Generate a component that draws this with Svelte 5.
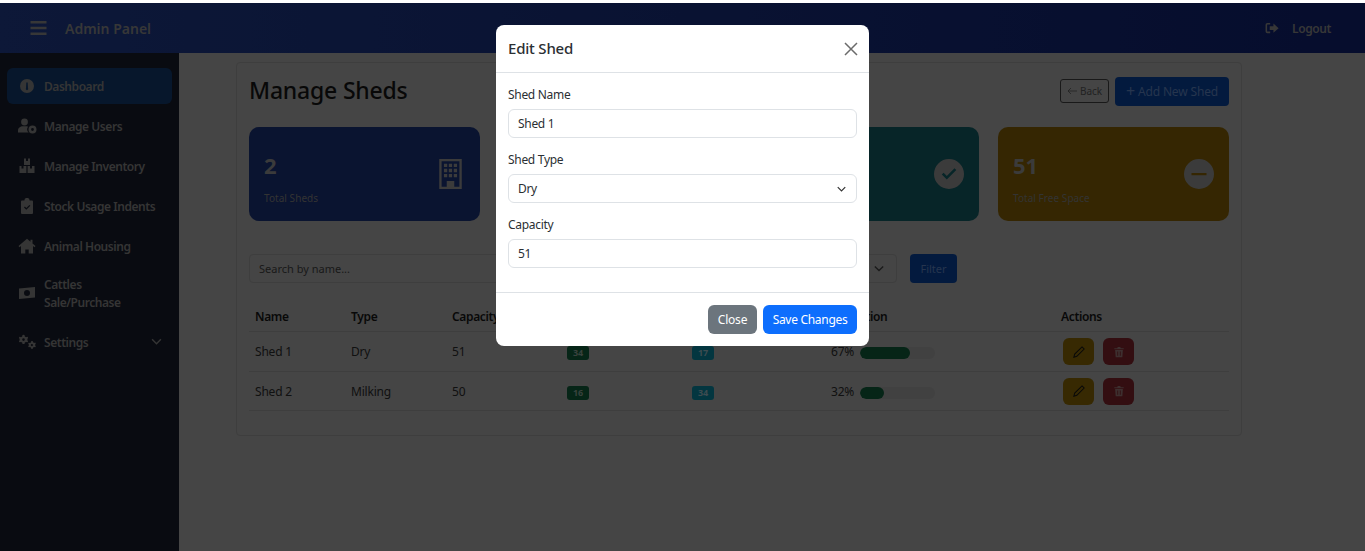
<script>
	const nav = [
		{ id: 'gauge', label: 'Dashboard', active: true },
		{ id: 'users', label: 'Manage Users' },
		{ id: 'boxes', label: 'Manage Inventory' },
		{ id: 'clip', label: 'Stock Usage Indents' },
		{ id: 'home', label: 'Animal Housing' },
		{ id: 'money', label: 'Cattles Sale/Purchase', tall: true },
		{ id: 'cogs', label: 'Settings', caret: true }
	];
	const sheds = [
		{ name: 'Shed 1', type: 'Dry', capacity: 51, occupied: 34, free: 17, pct: 67 },
		{ name: 'Shed 2', type: 'Milking', capacity: 50, occupied: 16, free: 34, pct: 32 }
	];
</script>

<div class="page">
	<header class="navbar">
		<div class="brand">
			<svg class="burger" viewBox="0 0 16 14" width="17" height="14"><path d="M0 0h16v2.400H0zM0 5.800h16v2.400H0zM0 11.600h16V14H0z" /></svg>
			<span>Admin Panel</span>
		</div>
		<div class="logout">
			<svg viewBox="0 0 16 14" width="15" height="13"><path d="M5.500 1H2.500A2 2 0 0 0 .5 3v7a2 2 0 0 0 2 2h3v-1.800h-3a.3.3 0 0 1-.3-.3V3.100a.3.3 0 0 1 .3-.3h3zM9 1.600l5.600 5-5.600 5V8.700H5V4.600h4z" /></svg>
			<span>Logout</span>
		</div>
	</header>

	<div class="layout">
		<aside class="sidebar">
			{#each nav as item}
				<div class="nav-item" class:active={item.active} class:tall={item.tall}>
					<svg class="nav-icon" viewBox="0 0 20 16" width="20" height="16">
						{#if item.id === 'gauge'}
							<path fill-rule="evenodd" d="M10 1a7 7 0 1 1 0 14 7 7 0 0 1 0-14zM9.300 4.500l-.3 5.800a1.200 1.200 0 1 0 2 0l-.3-5.800z" />
						{:else if item.id === 'users'}
							<circle cx="7.500" cy="4" r="3.400" /><path d="M1 14.500v-1.700C1 10 3.200 8.300 6 8.300h3c.8 0 1.400.1 2 .4a4.500 4.500 0 0 0 .7 5.800z" /><path fill-rule="evenodd" d="M15.500 7.500a4 4 0 1 1 0 8 4 4 0 0 1 0-8zm0 2.600a1.400 1.400 0 1 0 0 2.800 1.400 1.400 0 0 0 0-2.800z" />
						{:else if item.id === 'boxes'}
							<path d="M7 .5h2v2.500h2V.5h2V7H7zM2.500 8h2v2.500h2V8h2.900v7H2.500zM10.600 8h2.400v2.500h2V8h2.500v7h-6.900z" />
						{:else if item.id === 'clip'}
							<path fill-rule="evenodd" d="M5 2.500h2.400a2.600 2.600 0 0 1 5.200 0H15a1 1 0 0 1 1 1V15a1 1 0 0 1-1 1H5a1 1 0 0 1-1-1V3.500a1 1 0 0 1 1-1zM7 9.500l2.300 2.300 4-4-.9-.9-3.100 3.100-1.400-1.400z" />
						{:else if item.id === 'home'}
							<path d="M10 .8L1.500 8l1 1.200 1.500-1.200v7.500h4.300v-4h3.400v4H16V8l1.500 1.200 1-1.200-3-2.500V1.800h-2v2z" />
						{:else if item.id === 'money'}
							<path fill-rule="evenodd" d="M2 3.500l16-1.500v10.500l-16 1.500zM10 5a3 3 0 1 0 0 6 3 3 0 0 0 0-6z" />
						{:else}
							<path fill-rule="evenodd" d="M6.500.8l1 .3.300 1.400 1.200.7 1.400-.4.700.9-.7 1.200v1.300l.7 1.200-.7.9-1.400-.4-1.200.7-.3 1.400h-2l-.3-1.400-1.200-.7-1.400.4-.7-.9.7-1.200V4.900l-.7-1.200.7-.9 1.400.4 1.200-.7.300-1.400zm0 3.500a1.300 1.300 0 1 0 0 2.600 1.300 1.300 0 0 0 0-2.600z" />
							<path fill-rule="evenodd" d="M15 7l.9.200.2 1.100 1 .6 1.100-.3.600.8-.6 1v1.100l.6 1-.6.8-1.100-.3-1 .6-.2 1.100h-1.800l-.2-1.100-1-.6-1.100.3-.6-.8.6-1V10.500l-.6-1 .6-.8 1.100.3 1-.6.200-1.100zm-.100 3a1.100 1.100 0 1 0 0 2.200 1.100 1.100 0 0 0 0-2.200z" />
						{/if}
					</svg>
					<span class="nav-label">{item.label}</span>
					{#if item.caret}
						<svg class="caret" viewBox="0 0 12 8" width="11" height="7"><path d="M1 1.500l5 5 5-5" /></svg>
					{/if}
				</div>
			{/each}
		</aside>

		<main class="main">
			<section class="panel">
				<div class="title-row">
					<h1>Manage Sheds</h1>
					<div class="title-actions">
						<button class="btn-back">
							<svg viewBox="0 0 10 8" width="10" height="8"><path d="M10 4H1M4 1L1 4l3 3" /></svg>
							Back
						</button>
						<button class="btn-add"><span class="plus">+</span> Add New Shed</button>
					</div>
				</div>

				<div class="stats">
					<div class="stat blue">
						<div><div class="num">2</div><div class="cap">Total Sheds</div></div>
						<svg class="building" viewBox="0 0 24 32" width="23" height="30"><path fill-rule="evenodd" d="M0 0h24v32H0zM2.500 2.500v27h5.500v-6h8v6h5.500v-27zM5 5h3.500v3.500H5zM10.200 5h3.500v3.500h-3.500zM15.500 5H19v3.500h-3.500zM5 10.500h3.500V14H5zM10.200 10.500h3.500V14h-3.500zM15.500 10.500H19V14h-3.500zM5 16h3.500v3.500H5zM10.200 16h3.500v3.500h-3.500zM15.500 16H19v3.500h-3.500z" /></svg>
					</div>
					<div class="stat green"></div>
					<div class="stat teal">
						<span></span>
						<svg viewBox="0 0 30 30" width="30" height="30"><path fill-rule="evenodd" d="M15 0a15 15 0 1 1 0 30 15 15 0 0 1 0-30zM7.800 15.500l5 5 9.500-9.500-1.800-1.800-7.700 7.700-3.200-3.200z" /></svg>
					</div>
					<div class="stat yellow">
						<div><div class="num">51</div><div class="cap">Total Free Space</div></div>
						<svg viewBox="0 0 30 30" width="30" height="30"><path fill-rule="evenodd" d="M15 0a15 15 0 1 1 0 30 15 15 0 0 1 0-30zM7.500 14v2.200h15V14z" /></svg>
					</div>
				</div>

				<div class="filters">
					<div class="field search">Search by name...</div>
					<div class="field type-filter">
						<svg viewBox="0 0 12 8" width="10" height="7"><path d="M1 1.500l5 5 5-5" /></svg>
					</div>
					<button class="btn-filter">Filter</button>
				</div>

				<table>
					<thead>
						<tr>
							<th class="c-name">Name</th>
							<th class="c-type">Type</th>
							<th class="c-cap">Capacity</th>
							<th class="c-occ"></th>
							<th class="c-free"></th>
							<th class="c-pct">Utilization</th>
							<th>Actions</th>
						</tr>
					</thead>
					<tbody>
						{#each sheds as shed}
							<tr>
								<td>{shed.name}</td>
								<td>{shed.type}</td>
								<td>{shed.capacity}</td>
								<td><span class="badge b-green">{shed.occupied}</span></td>
								<td><span class="badge b-teal">{shed.free}</span></td>
								<td>
									<div class="occ">
										<span>{shed.pct}%</span>
										<div class="bar"><div class="fill" style="width: {shed.pct}%"></div></div>
									</div>
								</td>
								<td>
									<div class="acts">
										<button class="act a-edit">
											<svg viewBox="0 0 14 14" width="12" height="12"><path d="M10.500 1l2.500 2.500-8.500 8.500L1 13l1-3.500z" fill="none" stroke="#111" stroke-width="1.200" /></svg>
										</button>
										<button class="act a-del">
											<svg viewBox="0 0 14 14" width="12" height="12"><path fill-rule="evenodd" d="M1.500 2.500h3.500l.5-1.200h3l.5 1.200h3.500v1.300h-11zM2.500 4.800h9l-.6 8.200H3.100zM5 6.300v5.200h1V6.300zM8 6.300v5.200h1V6.300z" /></svg>
										</button>
									</div>
								</td>
							</tr>
						{/each}
					</tbody>
				</table>
			</section>
		</main>
	</div>

	<div class="backdrop"></div>

	<div class="modal">
		<div class="modal-head">
			<h2>Edit Shed</h2>
			<svg viewBox="0 0 14 14" width="14" height="14"><path d="M1 1l12 12M13 1L1 13" /></svg>
		</div>
		<div class="modal-body">
			<div class="label">Shed Name</div>
			<div class="control">Shed 1</div>
			<div class="label">Shed Type</div>
			<div class="control select">
				<span>Dry</span>
				<svg viewBox="0 0 12 8" width="9" height="6"><path d="M1 1.500l5 5 5-5" /></svg>
			</div>
			<div class="label">Capacity</div>
			<div class="control">51</div>
		</div>
		<div class="modal-foot">
			<button class="btn-close">Close</button>
			<button class="btn-save">Save Changes</button>
		</div>
	</div>
</div>

<style>
	:global(body) {
		margin: 0;
		background: #fff;
	}

	.page {
		position: relative;
		height: 551px;
		box-sizing: border-box;
		padding-top: 3px;
		overflow: hidden;
		font-family: 'Noto Sans', 'Open Sans', sans-serif;
		font-size: 12px;
		color: #212529;
	}

	button {
		font-family: inherit;
		border: none;
		padding: 0;
	}

	.navbar {
		height: 50px;
		display: flex;
		align-items: center;
		justify-content: space-between;
		padding: 0 34px 0 30px;
		background: linear-gradient(90deg, #1a3070, #0c1a5a);
		color: #6e6e6e;
	}

	.brand {
		display: flex;
		align-items: center;
		gap: 18px;
		font-size: 14px;
		font-weight: 600;
	}

	.burger,
	.logout svg {
		fill: #6e6e6e;
	}

	.logout {
		display: flex;
		align-items: center;
		gap: 12px;
		font-size: 12px;
		font-weight: 600;
		letter-spacing: -0.4px;
	}

	.layout {
		display: flex;
		height: 498px;
	}

	.sidebar {
		width: 179px;
		flex-shrink: 0;
		box-sizing: border-box;
		padding: 15px 7px 0;
		background: #131722;
	}

	.nav-item {
		display: flex;
		align-items: center;
		margin-bottom: 4px;
		padding: 9.500px 10px 8.500px;
		border-radius: 6px;
		color: #6a6a6a;
		font-size: 12px;
		font-weight: 600;
		line-height: 18px;
		letter-spacing: -0.45px;
	}

	.nav-item.active {
		background: #0f2f58;
	}

	.nav-item.tall {
		margin-top: -2px;
	}

	.nav-icon {
		width: 20px;
		margin: -2px 7px 0 0;
		flex-shrink: 0;
		fill: #6a6a6a;
	}

	.nav-label {
		flex: 1;
	}

	.tall .nav-label {
		max-width: 90px;
	}

	.caret {
		fill: none;
		stroke: #6a6a6a;
		stroke-width: 1.600;
		margin: -2px 0 0 auto;
	}

	.main {
		flex: 1;
		padding: 9px 123px 0 57px;
		background: #8a8a8a;
	}

	.panel {
		height: 374px;
		box-sizing: border-box;
		padding: 11px 12px;
		border: 1px solid #7d7d7d;
		border-radius: 4px;
	}

	.title-row {
		display: flex;
		align-items: center;
		justify-content: space-between;
		height: 34px;
		margin-bottom: 19px;
	}

	h1 {
		margin: -3px 0 0;
		font-size: 23px;
		font-weight: 500;
		letter-spacing: -0.2px;
		color: #111;
	}

	.title-actions {
		display: flex;
		align-items: center;
		gap: 6px;
	}

	.btn-back {
		width: 49px;
		height: 24px;
		display: flex;
		align-items: center;
		justify-content: center;
		gap: 3px;
		background: none;
		border: 1px solid #333;
		border-radius: 3px;
		color: #444;
		font-size: 10px;
	}

	.btn-back svg {
		fill: none;
		stroke: #444;
		stroke-width: 0.800;
	}

	.btn-add {
		width: 114px;
		height: 29px;
		background: #07357c;
		border-radius: 4px;
		color: #4c6a9c;
		font-size: 12px;
		letter-spacing: -0.15px;
	}

	.plus {
		font-size: 16px;
		line-height: 12px;
		vertical-align: -1px;
	}

	.stats {
		display: grid;
		grid-template-columns: repeat(4, 1fr);
		gap: 18.670px;
		margin-bottom: 33px;
	}

	.stat {
		height: 94px;
		box-sizing: border-box;
		padding: 6px 15px 0;
		display: flex;
		align-items: center;
		justify-content: space-between;
		border-radius: 10px;
	}

	.stat svg {
		fill: #777;
		margin-top: -6px;
	}

	.stat .building {
		margin-right: 3px;
	}

	.blue {
		background: #152860;
	}
	.green {
		background: #0e5434;
	}
	.teal {
		background: #0e4a50;
	}
	.yellow {
		background: #6a4d04;
	}

	.num {
		font-size: 22px;
		font-weight: 700;
		line-height: 30px;
		color: #777;
	}

	.cap {
		margin-top: 11px;
		font-size: 10px;
		letter-spacing: 0.05px;
		color: #666;
	}

	.filters {
		display: flex;
		align-items: center;
		gap: 13px;
		height: 29px;
		margin-bottom: 19px;
	}

	.field {
		height: 29px;
		box-sizing: border-box;
		display: flex;
		align-items: center;
		border: 1px solid #7d7d7d;
		border-radius: 4px;
		color: #333;
		font-size: 11px;
	}

	.search {
		width: 518px;
		padding-left: 9px;
	}

	.type-filter {
		width: 117px;
		padding: 0 12px;
		justify-content: flex-end;
	}

	.type-filter svg,
	.select svg {
		fill: none;
		stroke: #333;
		stroke-width: 1.600;
	}

	.btn-filter {
		width: 47px;
		height: 29px;
		background: #07357c;
		border-radius: 4px;
		color: #4c6a9c;
		font-size: 11px;
	}

	table {
		width: 100%;
		border-collapse: collapse;
		table-layout: fixed;
		color: #222;
		font-size: 12px;
		letter-spacing: -0.2px;
	}

	th {
		height: 29px;
		padding: 0 6px;
		text-align: left;
		font-weight: 600;
		letter-spacing: -0.35px;
		color: #111;
		border-bottom: 1px solid #7d7d7d;
	}

	td {
		height: 39px;
		padding: 0 6px;
		border-bottom: 1px solid #7d7d7d;
	}

	tbody tr:last-child td {
		height: 38px;
	}

	.c-name {
		width: 84px;
	}
	.c-type {
		width: 89px;
	}
	.c-cap {
		width: 103px;
	}
	.c-occ {
		width: 113px;
	}
	.c-free {
		width: 127px;
	}
	.c-pct {
		width: 218px;
	}

	.badge {
		display: inline-block;
		padding: 0 6px;
		border-radius: 3px;
		font-size: 9px;
		font-weight: 700;
		line-height: 14px;
	}

	.b-green {
		background: #0c4a2e;
		color: #72857b;
	}
	.b-teal {
		background: #076c80;
		color: #7a98a2;
	}

	.occ {
		display: flex;
		align-items: center;
		gap: 5px;
	}

	.bar {
		width: 75px;
		height: 12px;
		margin: 3px 0 0 1px;
		border-radius: 6px;
		background: #838383;
		overflow: hidden;
	}

	.fill {
		height: 100%;
		background: #0c4a2e;
		border-radius: 6px;
	}

	.acts {
		display: flex;
		gap: 9px;
		padding-left: 2px;
	}

	.act {
		width: 31px;
		height: 27px;
		display: flex;
		align-items: center;
		justify-content: center;
		border-radius: 6px;
	}

	.a-edit {
		background: #6e5305;
	}

	.a-del {
		background: #661c22;
	}

	.a-del svg {
		fill: #7a5e5e;
	}

	.backdrop {
		position: absolute;
		left: 0;
		right: 0;
		top: 3px;
		bottom: 0;
		background: rgba(0, 0, 0, 0.5);
	}

	.modal {
		position: absolute;
		left: 496px;
		top: 25px;
		width: 373px;
		height: 321px;
		display: flex;
		flex-direction: column;
		background: #fff;
		border-radius: 8px;
		font-size: 12px;
		letter-spacing: -0.3px;
		color: #2b2f33;
	}

	.modal-head {
		height: 48px;
		flex-shrink: 0;
		box-sizing: border-box;
		padding: 0 11px 0 12px;
		display: flex;
		align-items: center;
		justify-content: space-between;
		border-bottom: 1px solid #dee2e6;
	}

	h2 {
		margin: -2px 0 0;
		font-size: 15px;
		font-weight: 500;
		letter-spacing: -0.2px;
	}

	.modal-head svg {
		fill: none;
		stroke: #6b6b6b;
		stroke-width: 1.500;
	}

	.modal-body {
		flex: 1;
		padding: 13px 12px 0;
	}

	.label {
		height: 17px;
		margin-bottom: 6px;
		line-height: 17px;
	}

	.control {
		height: 29px;
		box-sizing: border-box;
		margin-bottom: 13px;
		padding: 0 10px 0 9px;
		display: flex;
		align-items: center;
		justify-content: space-between;
		border: 1px solid #dee2e6;
		border-radius: 6px;
	}

	.modal-foot {
		height: 54px;
		flex-shrink: 0;
		box-sizing: border-box;
		padding: 0 12px;
		display: flex;
		align-items: center;
		justify-content: flex-end;
		gap: 6px;
		border-top: 1px solid #dee2e6;
	}

	.btn-close {
		width: 49px;
		height: 29px;
		background: #6c757d;
		border-radius: 6px;
		color: #fff;
		font-size: 12px;
		letter-spacing: -0.2px;
	}

	.btn-save {
		width: 94px;
		height: 29px;
		background: #0d6efd;
		border-radius: 6px;
		color: #fff;
		font-size: 12px;
		letter-spacing: -0.3px;
	}
</style>
